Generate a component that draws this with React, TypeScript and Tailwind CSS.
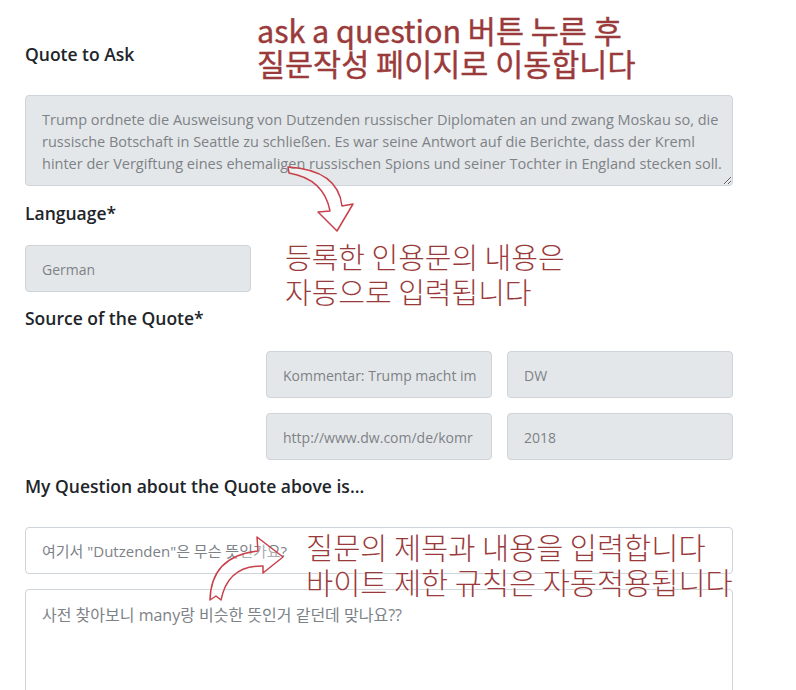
import React from 'react';

const quote =
  'Trump ordnete die Ausweisung von Dutzenden russischer Diplomaten an und zwang Moskau so, die\nrussische Botschaft in Seattle zu schließen. Es war seine Antwort auf die Berichte, dass der Kreml\nhinter der Vergiftung eines ehemaligen russischen Spions und seiner Tochter in England stecken soll.';

const Label = ({ text, className = '' }: { text: string; className?: string }) => (
  <div className={`text-[17.5px] leading-6 font-semibold text-[#212529] ${className}`}>{text}</div>
);

const Field = ({ value }: { value: string }) => (
  <div className="h-[47px] flex items-center pt-[2px] px-[16px] bg-[#e4e7e9] border border-[#ced4da] rounded-[4px] text-[14px] text-[#7d8287] overflow-hidden whitespace-nowrap">
    {value}
  </div>
);

const Note = ({ lines, className }: { lines: string[]; className: string }) => (
  <div
    className={`absolute font-['Noto_Sans_CJK_KR','Noto_Sans',sans-serif] text-[#9a3a3a] [text-shadow:0_0_2px_#fff,0_0_2px_#fff] ${className}`}
  >
    {lines.map((l) => (
      <div key={l}>{l}</div>
    ))}
  </div>
);

export default function App() {
  return (
    <div className="relative w-[796px] h-[690px] overflow-hidden bg-white font-['Open_Sans','Noto_Sans_CJK_KR',sans-serif]">
      <div className="w-[708px] ml-[25px] pt-[42px]">
        <Label text="Quote to Ask" />
        <textarea
          readOnly
          value={quote}
          className="block w-full h-[91px] mt-[29px] px-[16px] pt-[13px] pb-[9px] bg-[#e4e7e9] border border-[#ced4da] rounded-[4px] text-[14.5px] leading-[22px] text-[#7d8287] overflow-hidden whitespace-pre"
        />
        <Label text="Language*" className="mt-[15px]" />
        <div className="grid grid-cols-3 gap-[15px] mt-[20px]">
          <Field value="German" />
        </div>
        <Label text="Source of the Quote*" className="mt-[14px]" />
        <div className="grid grid-cols-3 gap-[15px] mt-[21px]">
          <div />
          <Field value="Kommentar: Trump macht im" />
          <Field value="DW" />
          <div />
          <Field value="http://www.dw.com/de/komr" />
          <Field value="2018" />
        </div>
        <Label text="My Question about the Quote above is..." className="mt-[14px]" />
        <div className="h-[47px] mt-[29px] flex items-center pt-[2px] px-[16px] bg-white border border-[#ced4da] rounded-[4px] text-[15px] text-[#7d8287]">
          여기서 "Dutzenden"은 무슨 뜻인가요?
        </div>
        <div className="h-[150px] mt-[15px] px-[16px] py-[14px] bg-white border border-[#ced4da] rounded-[4px] text-[16px] leading-[22px] text-[#7d8287]">
          사전 찾아보니 many랑 비슷한 뜻인거 같던데 맞나요??
        </div>
      </div>

      <svg className="absolute inset-0 pointer-events-none" width="796" height="690" viewBox="0 0 796 690">
        <path
          d="M 288 167 Q 338 170 342 206 L 353 204 L 337 231 L 318 212 L 330 211 Q 324 179 289 173 Z"
          fill="white"
          fillOpacity="0.35"
          stroke="#c8414b"
          strokeWidth="1.5"
          strokeLinejoin="round"
        />
        <path
          d="M 210 600 Q 211 556 258 551 L 257 537 L 283 557 L 263 573 L 263 566 Q 228 565 221 600 L 216 596 Z"
          fill="white"
          fillOpacity="0.35"
          stroke="#c8414b"
          strokeWidth="1.5"
          strokeLinejoin="round"
        />
      </svg>

      <Note
        lines={['ask a question 버튼 누른 후', '질문작성 페이지로 이동합니다']}
        className="left-[257px] top-[14px] text-[30.5px] leading-[33px] font-normal [-webkit-text-stroke:0.4px_#9a3a3a]"
      />
      <Note
        lines={['등록한 인용문의 내용은', '자동으로 입력됩니다']}
        className="left-[285px] top-[239px] text-[29px] leading-[35px] font-light"
      />
      <Note
        lines={['질문의 제목과 내용을 입력합니다', '바이트 제한 규칙은 자동적용됩니다']}
        className="left-[306px] top-[529px] text-[29.5px] leading-[35px] font-light"
      />
    </div>
  );
}
